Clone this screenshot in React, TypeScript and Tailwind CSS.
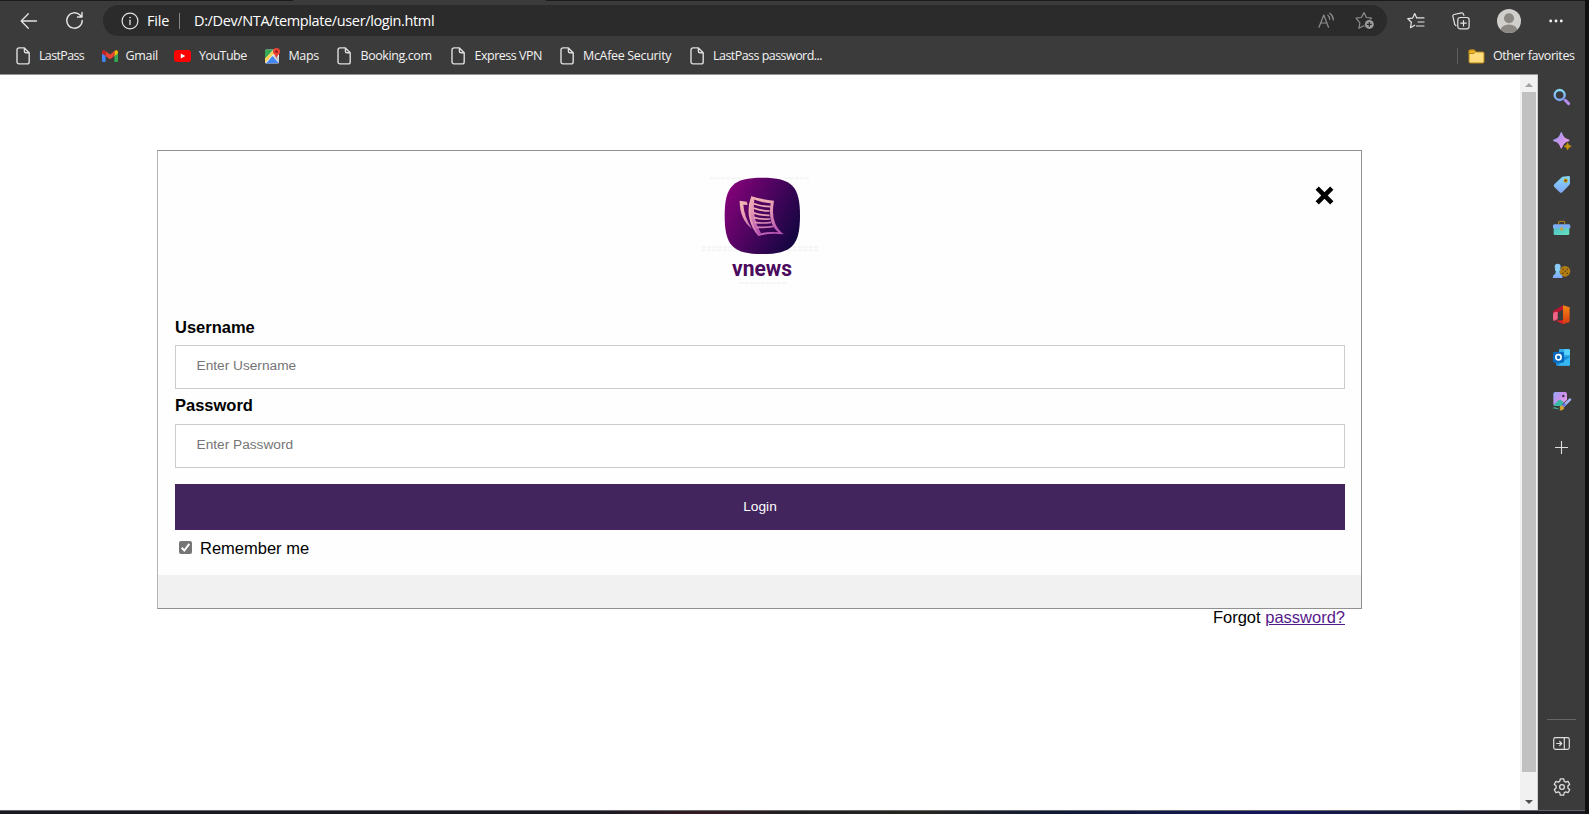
import React from "react";

const ui = "font-['Open_Sans',sans-serif]";

const FileIcon = () => (
  <svg width="15" height="18" viewBox="0 0 15 18" fill="none" stroke="#dedede" strokeWidth="1.4" strokeLinejoin="round">
    <path d="M3 .9h5.4l4.8 4.8v9.2a2 2 0 0 1-2 2H3a2 2 0 0 1-2-2V2.900a2 2 0 0 1 2-2zM8.400 1v3.200a1.500 1.500 0 0 0 1.500 1.500h3.200" />
  </svg>
);
const GmailIcon = () => (
  <svg width="16" height="12" viewBox="0 0 16 12">
    <path d="M0 2v9q0 1 1 1h2.600V4.700z" fill="#4285f4" />
    <path d="M16 2v9q0 1-1 1h-2.600V4.700z" fill="#34a853" />
    <path d="M12.400 1.100 14 .200q2-.4 2 2v1.200l-3.600 2.700z" fill="#fbbc04" />
    <path d="M3.600 6.100V1.200L8 4.400l4.400-3.300v5L8 9.300z" fill="#ea4335" />
    <path d="M0 3.400V2Q.2-.5 2.400.3l1.200.9v4.900z" fill="#c5221f" />
  </svg>
);
const YouTubeIcon = () => (
  <svg width="17" height="12" viewBox="0 0 17 12">
    <rect width="17" height="12" rx="3.200" fill="#f00" />
    <path d="m6.800 3.500 4.500 2.500-4.500 2.500z" fill="#fff" />
  </svg>
);
const MapsIcon = () => (
  <svg width="16" height="16" viewBox="0 0 16 16">
    <rect x="0" y="1.500" width="14" height="14" rx="1.500" fill="#e8eaed" />
    <path d="M0 3q0-1.500 1.500-1.500h7L0 11z" fill="#34a853" />
    <path d="M1 15.500 7.500 8l6.200 7.100z" fill="#4285f4" />
    <path d="M0 10.500 8.800 1.800l2 2L0 15z" fill="#fbd35b" />
    <path d="m8.500 8.300 2-1.600 3.500 3v4.800z" fill="#c9ccd0" />
    <path d="M11.500 0a3.600 3.600 0 0 1 3.600 3.600c0 2.600-2.600 3.300-3.600 7-1-3.700-3.600-4.400-3.600-7A3.600 3.600 0 0 1 11.500 0z" fill="#ea4335" />
    <circle cx="11.500" cy="3.600" r="1.300" fill="#8c1a12" />
  </svg>
);

const bookmarks = [
  { label: "LastPass", w: "w-[86px]", g: "w-[23px]", t: "tracking-[-0.65px]", icon: <FileIcon /> },
  { label: "Gmail", w: "w-[72px]", g: "w-[23.500px]", t: "tracking-[-0.3px]", icon: <GmailIcon /> },
  { label: "YouTube", w: "w-[91px]", g: "w-[25px]", t: "tracking-[-0.52px]", icon: <YouTubeIcon /> },
  { label: "Maps", w: "w-[72px]", g: "w-[23.500px]", t: "tracking-[-0.4px]", icon: <MapsIcon /> },
  { label: "Booking.com", w: "w-[114px]", g: "w-[23.500px]", t: "tracking-[-0.42px]", icon: <FileIcon /> },
  { label: "Express VPN", w: "w-[109px]", g: "w-[23.500px]", t: "tracking-[-0.48px]", icon: <FileIcon /> },
  { label: "McAfee Security", w: "w-[130px]", g: "w-[23px]", t: "tracking-[-0.33px]", icon: <FileIcon /> },
  { label: "LastPass password...", w: "w-[150px]", g: "w-[23px]", t: "tracking-[-0.54px]", icon: <FileIcon /> },
];

function Toolbar() {
  return (
    <div className="flex h-[39px] shrink-0 items-center">
      <svg className="ml-[20px]" width="18" height="18" viewBox="0 0 18 18" fill="none" stroke="#e4e4e4" strokeWidth="1.300" strokeLinecap="round" strokeLinejoin="round">
        <path d="M16.500 9H1.200M8.300 1.800 1.200 9l7.100 7.200" />
      </svg>
      <svg className="ml-[27px]" width="19" height="19" viewBox="0 0 19 19" fill="none" stroke="#e4e4e4" strokeWidth="1.400" strokeLinecap="round" strokeLinejoin="round">
        <path d="M17.200 9.500a7.700 7.700 0 1 1-2.200-5.400l1.800 1.900M17 1.500V6h-4.500" />
      </svg>
      <div className="ml-[19px] flex h-[31px] w-[1284px] items-center rounded-full bg-[#2b2b2b] pl-[18px]">
        <svg width="18" height="18" viewBox="0 0 18 18" fill="none" stroke="#e4e4e4" strokeWidth="1.200" strokeLinecap="round">
          <circle cx="9" cy="9" r="7.900" />
          <path d="M9 8.200v4.300" strokeWidth="1.300" />
          <circle cx="9" cy="5.600" r=".4" strokeWidth=".8" />
        </svg>
        <span className="ml-[8px] w-[32px] text-[14.500px] tracking-[-0.2px] text-white">File</span>
        <span className="h-4 w-px bg-[#858585]" />
        <span className="ml-[14px] whitespace-nowrap text-[14.500px] tracking-[-0.37px] text-white">D:/Dev/NTA/template/user/login.html</span>
        <svg className="ml-auto" width="17" height="17" viewBox="0 0 17 17" fill="none" stroke="#8d8d8d" strokeWidth="1.200" strokeLinecap="round" strokeLinejoin="round">
          <path d="M1 15.300 5.800 3l4.700 12.300M2.600 11h6.500M9.800 3.200a5.500 5.500 0 0 1 2 4.300M11.800 1.200a9 9 0 0 1 3.600 6.700" />
        </svg>
        <svg className="ml-[20px] mr-[12px]" width="20" height="19" viewBox="0 0 20 19">
          <path d="m9 1.600 2.300 4.900 5.300.6-3.900 3.700.3 1-1 4-3.400-1-4.700 2.500 1-5.400L1 7.100l5.400-.6z" fill="none" stroke="#8d8d8d" strokeWidth="1.200" strokeLinejoin="round" />
          <circle cx="14.300" cy="13.400" r="5.200" fill="#2b2b2b" />
          <circle cx="14.300" cy="13.400" r="4.500" fill="#9c9c9c" />
          <path d="M14.300 11v4.800M11.900 13.400h4.800" stroke="#2b2b2b" strokeWidth="1.200" />
        </svg>
      </div>
      <svg className="ml-[20px]" width="18" height="18" viewBox="0 0 18 18" fill="none" stroke="#e4e4e4" strokeWidth="1.200" strokeLinecap="round" strokeLinejoin="round">
        <path d="m9.600 5.800-1.900-4.300-2 4.600-4.900.6 3.600 3.500-.9 5.500 4.200-2.500M9.600 5.900H17M11 10h6M9.500 14H17" />
      </svg>
      <svg className="ml-[27px]" width="18" height="18" viewBox="0 0 18 18" fill="none" stroke="#e4e4e4" strokeWidth="1.200" strokeLinecap="round" strokeLinejoin="round">
        <rect x="5.800" y="5.500" width="11.300" height="11.300" rx="2.200" />
        <path d="M11.500 8.500v5.400M8.800 11.200h5.400M3.900 13.500 2.800 12.600.9 4.400Q.6 2.900 2 2.500L9.500.9q1.500-.2 1.900 1.200l.5 1.300" />
      </svg>
      <svg className="ml-[27px]" width="24" height="24" viewBox="0 0 24 24">
        <defs><clipPath id="avatar"><circle cx="12" cy="12" r="12" /></clipPath></defs>
        <g clipPath="url(#avatar)">
          <rect width="24" height="24" fill="#d1cfcc" />
          <circle cx="12" cy="9.300" r="5" fill="#8b8783" />
          <ellipse cx="12" cy="21.500" rx="8.500" ry="6" fill="#8b8783" />
        </g>
      </svg>
      <svg className="ml-[28px]" width="14" height="4" viewBox="0 0 14 4" fill="#f0f0f0">
        <circle cx="1.700" cy="2" r="1.450" /><circle cx="7" cy="2" r="1.450" /><circle cx="12.300" cy="2" r="1.450" />
      </svg>
    </div>
  );
}

function Bookmarks() {
  return (
    <div className="flex h-[34px] shrink-0 items-center pb-[2px] pl-[16px] text-[12.500px] text-[#f2f2f2]">
      {bookmarks.map((b) => (
        <div key={b.label} className={`flex shrink-0 items-center ${b.w}`}>
          <span className={b.g}>{b.icon}</span>
          <span className={`whitespace-nowrap ${b.t}`}>{b.label}</span>
        </div>
      ))}
      <div className="ml-auto flex items-center pr-[10px]">
        <span className="mr-[10px] h-4 w-px bg-[#5e5e5e]" />
        <svg width="17" height="15" viewBox="0 0 17 15">
          <path d="M1 2.200Q1 1 2.200 1h4l2 2h6.600Q16 3 16 4.200v8.600q0 1.200-1.200 1.200H2.200Q1 14 1 12.800z" fill="#ffdc7c" stroke="#b58516" />
          <path d="M1 4.500V2.200Q1 1 2.200 1h4l1.300 1.300L6 4.500z" fill="#f0b62a" stroke="#b58516" />
        </svg>
        <span className="ml-[8px] w-[82px] whitespace-nowrap tracking-[-0.42px]">Other favorites</span>
      </div>
    </div>
  );
}

function Logo() {
  return (
    <svg width="140" height="125" viewBox="0 0 420 375">
      <defs>
        <linearGradient id="tile" x1="0" y1=".2" x2="1" y2=".75">
          <stop offset="0" stopColor="#850279" /><stop offset=".5" stopColor="#4a045e" /><stop offset="1" stopColor="#11063f" />
        </linearGradient>
        <linearGradient id="paper" x1="0" y1="0" x2=".6" y2="1">
          <stop offset="0" stopColor="#f6c3b4" /><stop offset=".5" stopColor="#e79bb4" /><stop offset="1" stopColor="#b855b4" />
        </linearGradient>
        <linearGradient id="lines" gradientUnits="userSpaceOnUse" x1="190" y1="110" x2="250" y2="200">
          <stop offset="0" stopColor="#f6c3b4" /><stop offset=".5" stopColor="#e79bb4" /><stop offset="1" stopColor="#b855b4" />
        </linearGradient>
      </defs>
      <g fill="none" stroke="#f5f5f5" strokeWidth="6" strokeDasharray="13 3">
        <path d="M60 40h95M282 40h75M34 247h110M292 247h94M34 256h110M292 256h94M148 354h140" />
      </g>
      <path d="M217 38C306 38 330 64 330 152S306 267 217 267 104 241 104 152 129 38 217 38z" fill="url(#tile)" />
      <path fillRule="evenodd" fill="url(#paper)" d="M184 94Q217 104 252 107Q244 150 256 176Q262 192 281 208Q238 203 205 213Q184 190 178 160Q171 128 184 94zM190 103Q183 132 189 162Q194 188 209 206Q238 198 265 202Q249 188 244 170Q237 145 242 115Q216 113 190 103z" />
      <path fill="url(#paper)" d="M149 107 170 110 173 120 160 119Q163 158 186 191Q149 163 149 107zM184 95Q170 155 207 212L213 205Q185 160 193 100z" />
      <g fill="none" stroke="url(#lines)" strokeWidth="5">
        <path d="M192 116q24 9 49 9M190 129q24 9 49 9M190 143q25 9 49 8M191 157q25 7 50 5M194 172q25 4 50 0M199 187q26 1 52-3" />
      </g>
      <text x="126" y="333" textLength="180" lengthAdjust="spacingAndGlyphs" fontFamily="Roboto, sans-serif" fontWeight="700" fontSize="66" fill="#4b0a5d">vnews</text>
    </svg>
  );
}

function LoginCard() {
  const field = "block w-full border border-[#ccc] bg-white pb-[3px] pl-[20.500px] text-[13.700px] outline-none placeholder:text-[#757575]";
  return (
    <form className="ml-[157px] flex h-[459px] w-[1205px] flex-col border border-[#909090] border-l-[#b4b4b4] bg-[#fefefe]" onSubmit={(e) => e.preventDefault()}>
      <div className="relative flex h-[163px] justify-center pl-px pt-[14px]">
        <Logo />
        <button type="button" aria-label="Close" className="absolute right-[27px] top-[35px]">
          <svg width="19" height="19" viewBox="0 0 19 19" stroke="#000" strokeWidth="4.600" strokeLinecap="butt">
            <path d="m2.200 2.200 14.600 14.600M16.800 2.200 2.200 16.800" />
          </svg>
        </button>
      </div>
      <div className="flex flex-col pl-[17px] pr-[16px] text-[16.500px] leading-[20px]">
        <label className="h-[31px] pt-[3px] font-bold">Username</label>
        <input className={`h-[44px] ${field}`} placeholder="Enter Username" />
        <label className="h-[35px] pt-[6px] font-bold">Password</label>
        <input className={`h-[44px] ${field}`} type="password" placeholder="Enter Password" />
        <button type="submit" className="mt-4 h-[46px] bg-[#42255c] pb-[1px] text-[13.700px] text-white">Login</button>
        <label className="mt-[8px] flex items-center pl-[4px] text-[16.500px]">
          <svg className="mb-[2px] mr-[8px]" width="13" height="13" viewBox="0 0 13 13">
            <rect width="13" height="13" rx="2" fill="#757575" />
            <path d="m2.700 6.800 2.600 2.700 5-6.600" fill="none" stroke="#fff" strokeWidth="2" />
          </svg>
          Remember me
        </label>
      </div>
      <div className="mt-auto h-[33px] bg-[#f1f1f1]" />
    </form>
  );
}

const sideIcons = [
  <g key="search"><circle cx="20" cy="18" r="15" fill="none" stroke="url(#sb)" strokeWidth="7" /><path d="m37 34 10 10" stroke="#b88cf0" strokeWidth="9" strokeLinecap="round" /><path d="m30 28 5 5" stroke="#718bd8" strokeWidth="5" /></g>,
  <g key="spark"><path d="M25 3q4 18 22 22-18 4-22 22-4-18-22-22Q21 21 25 3z" fill="url(#sp)" stroke="url(#sp)" strokeWidth="5" strokeLinejoin="round" /><path d="M44 32q2 9 11 11-9 2-11 11-2-9-11-11 9-2 11-11z" fill="#c8960d" stroke="#c8960d" strokeWidth="1.500" /></g>,
  <g key="tag"><path d="M28 2 47 0q4 0 4 4v18q0 3-3 6L28 49q-4 3-8 0L4 33q-4-4 0-8z" fill="url(#sb)" /><circle cx="38" cy="14" r="6.500" fill="#c8960d" /><circle cx="38" cy="14" r="2.500" fill="#403020" /></g>,
  <g key="case" transform="translate(0 2)"><path d="M17 14V8q0-3 3-3h12q3 0 3 3v6" fill="none" stroke="#a6781b" strokeWidth="4" /><rect x="2" y="18" width="47" height="28" rx="4" fill="url(#tl)" /><path d="M0 18q0-4 5-4h42q5 0 5 4v8H0z" fill="#7cacf2" /><circle cx="26" cy="28" r="5" fill="#c8a34a" /></g>,
  <g key="games"><circle cx="36" cy="25" r="16" fill="#b37d13" /><g fill="#604313"><circle cx="30" cy="19" r="2.500" /><circle cx="43" cy="19" r="2.500" /><circle cx="37" cy="25" r="2.500" /><circle cx="30" cy="31" r="2.500" /><circle cx="43" cy="31" r="2.500" /></g><circle cx="14" cy="11" r="9" fill="#8bc9f6" /><path d="M6 18h16v5h-3q0 10 8 14l2 8H-1l2-8q8-4 8-14H6z" fill="url(#sb)" /></g>,
  <g key="office"><path d="M0 15 30-2v13l-12 6q-4 2-4 7v15L3 45q-3-2-3-8z" fill="#b81531" /><path d="M0 26q0-7 6-8l8-1v22L3 45q-3-2-3-8z" fill="#ef668a" /><path d="M30-2 50 4v44l-20 7z" fill="url(#of)" /><path d="m8 44 22-2v13z" fill="#d5202c" /></g>,
  <g key="outlook"><rect x="18" y="0" width="33" height="32" rx="3" fill="#32a9e8" /><path d="M34 1h14q3 0 3 3v14H34z" fill="#57d3ff" /><rect x="9" y="23" width="42" height="27" rx="3" fill="#168ddb" /><path d="m28 39 23-14v22q0 3-3 3H13z" fill="#38b8f2" /><rect x="0" y="9" width="33" height="32" rx="4" fill="#0768bd" /><circle cx="16.500" cy="25" r="8" fill="none" stroke="#fff" strokeWidth="5" /></g>,
  <g key="draw"><rect x="1" y="-3" width="41" height="42" rx="6" fill="url(#sp)" /><path d="M2 36 17 22q4-3 8 0l15 14q-1 3-6 3H7q-4 0-5-3z" fill="#36baa5" /><circle cx="31" cy="9" r="4" fill="#433459" /><path d="M31 39 51 20" stroke="#3b3b3b" strokeWidth="12" /><path d="M31 39 51 20" stroke="#a9b4f6" strokeWidth="8" strokeLinecap="round" /><path d="m30 40 7-7" stroke="#6476dd" strokeWidth="8" /><path d="M22 39q8-2 12 5-3 10-15 8l3-4q-4-5 0-9z" fill="#d6a12d" /><path d="M0 46q10-5 8 1 5-2 9 1" fill="none" stroke="#42baa2" strokeWidth="3" /></g>,
];

function Sidebar() {
  return (
    <aside className="flex w-[48px] flex-col items-center bg-[#3b3b3b]">
      <svg className="absolute" width="0" height="0">
        <defs>
          <linearGradient id="sb" x1="0" y1="0" x2="0" y2="1"><stop offset="0" stopColor="#83d8f4" /><stop offset="1" stopColor="#82a7f9" /></linearGradient>
          <linearGradient id="sp" x1="0" y1="0" x2="1" y2=".7"><stop offset="0" stopColor="#92aafb" /><stop offset=".5" stopColor="#c492ec" /><stop offset="1" stopColor="#e99de5" /></linearGradient>
          <linearGradient id="tl" x1="0" y1="0" x2="1" y2="1"><stop offset="0" stopColor="#4bbccb" /><stop offset="1" stopColor="#68e3bc" /></linearGradient>
          <linearGradient id="of" x1="0" y1="0" x2="0" y2="1"><stop offset="0" stopColor="#f58a13" /><stop offset="1" stopColor="#d83412" /></linearGradient>
        </defs>
      </svg>
      <div className="flex flex-col pl-px pt-[2px]">
        {sideIcons.map((icon, i) => (
          <div key={i} className="flex h-[43.400px] items-center">
            <svg className="overflow-visible" width="17.300" height="17.300" viewBox="0 0 52 52">{icon}</svg>
          </div>
        ))}
      </div>
      <svg className="mr-px mt-[18px]" width="13" height="13" viewBox="0 0 13 13" stroke="#dedede" strokeWidth="1.100"><path d="M6.500 0v13M0 6.500h13" /></svg>
      <div className="mt-auto h-px w-[29px] bg-[#656565]" />
      <svg className="mt-[17px]" width="17" height="13" viewBox="0 0 17 13" fill="none" stroke="#dedede" strokeWidth="1.200" strokeLinecap="round" strokeLinejoin="round">
        <rect x=".7" y=".7" width="15.600" height="11.600" rx="1.800" /><path d="M11.300 1v11M3.700 6.500h5M6.700 4.500l2 2-2 2" />
      </svg>
      <svg className="mb-[14px] mt-[28px]" width="18" height="18" viewBox="0 0 18 18" fill="none" stroke="#dedede" strokeWidth="1.300" strokeLinejoin="round">
        <path d="M7.300.9h3.400l.5 2.300 1.500.9 2.300-.8 1.700 3-1.800 1.700v2l1.800 1.700-1.700 3-2.300-.8-1.500.9-.5 2.300H7.300l-.5-2.300-1.500-.9-2.300.8-1.700-3L3.100 10V8L1.300 6.300l1.700-3 2.300.8 1.500-.9z" />
        <circle cx="9" cy="9" r="2.400" />
      </svg>
    </aside>
  );
}

export default function App() {
  return (
    <div className={`flex h-[814px] w-[1589px] overflow-hidden bg-[#3b3b3b] ${ui}`}>
      <div className="flex w-[1585px] flex-col">
        <div className="flex h-px shrink-0 bg-[#1b1b1b]"><span className="ml-[293px] w-[253px] bg-[#3b3b3b]" /></div>
        <Toolbar />
        <Bookmarks />
        <div className="flex h-[736px] shrink-0">
          <div className="flex w-[1538px] border-t border-[#969696] bg-white">
            <main className="w-[1520px] pt-[75px] font-['Liberation_Sans',Arial,sans-serif] text-black">
              <LoginCard />
              <p className="pr-[175px] text-right text-[16.500px] leading-[17px]">
                Forgot <a className="text-[#551a8b] underline" href="#">password?</a>
              </p>
            </main>
            <div className="flex w-[18px] flex-col items-center border-r border-[#d0d0d0] bg-[#f1f1f1]">
              <svg width="8" height="17" viewBox="0 0 8 17"><path d="M0 12 4 8l4 4z" fill="#a3a3a3" /></svg>
              <div className="w-[14px] flex-1 bg-[#c1c1c1]" />
              <svg width="8" height="38" viewBox="0 0 8 38"><path d="m0 28 4 4 4-4z" fill="#505050" /></svg>
            </div>
          </div>
          <Sidebar />
        </div>
        <div className="flex h-[4px] border-t border-[#66656b] bg-[#1b1a22]">
          <div className="ml-[600px] w-[200px] bg-gradient-to-r from-[#1b1a22] via-[#351a22] to-[#1f2120]" />
          <div className="w-[250px] bg-gradient-to-r from-[#1f2120] via-[#26251f] to-[#101a35]" />
          <div className="w-[450px] bg-gradient-to-r from-[#101a35] via-[#14145a] to-[#1b1a22]" />
        </div>
      </div>
      <div className="w-[4px] bg-[#101010]" />
    </div>
  );
}
